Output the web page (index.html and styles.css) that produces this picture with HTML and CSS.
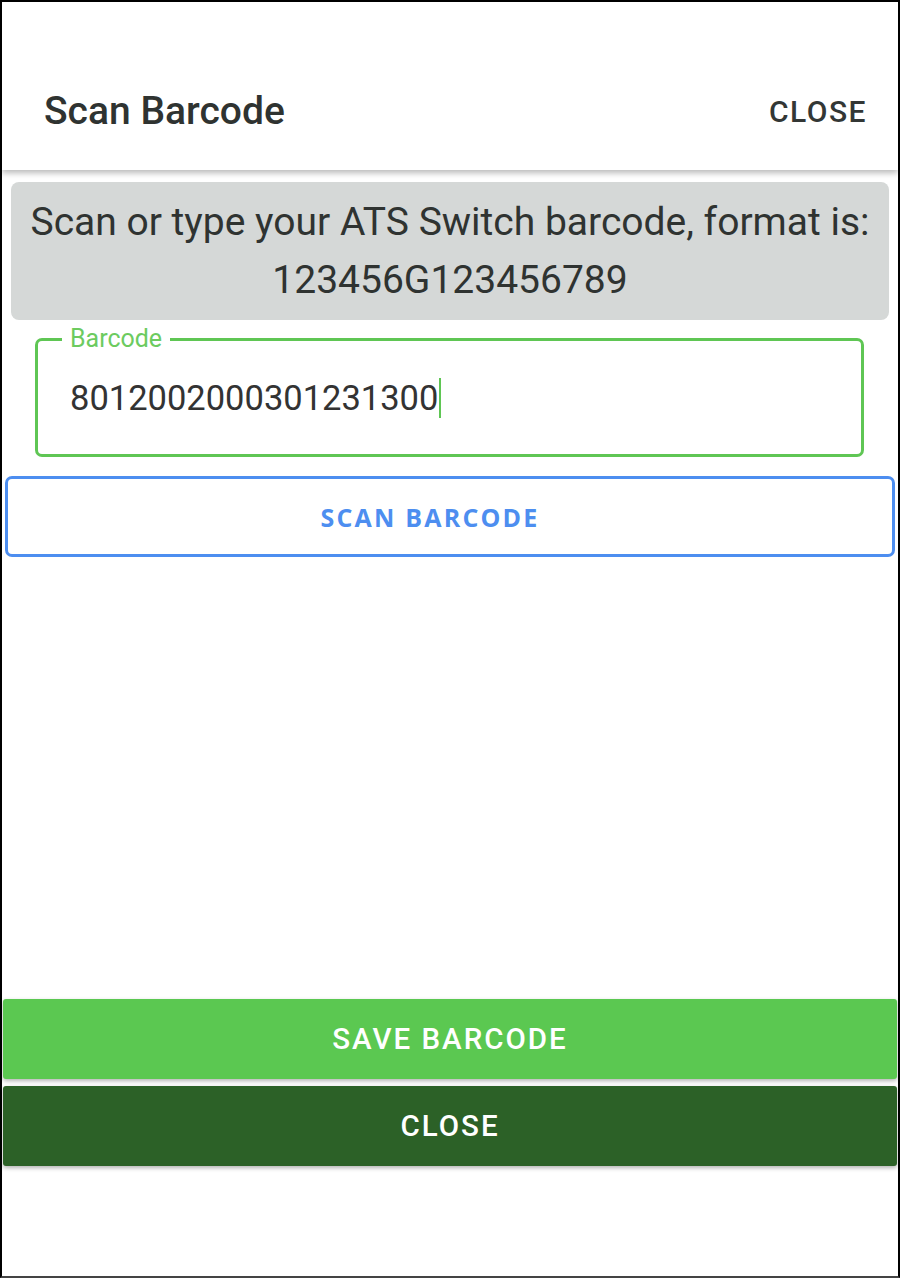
FILE: index.html
```html
<!DOCTYPE html>
<html>
<head>
<meta charset="utf-8">
<link rel="stylesheet" href="styles.css">
</head>
<body>
<div class="frame">
  <header class="topbar">
    <h1 class="title">Scan Barcode</h1>
    <span class="top-close">CLOSE</span>
  </header>
  <main class="content">
    <div class="notice">
      <p>Scan or type your ATS Switch barcode, format is:</p>
      <p>123456G123456789</p>
    </div>
    <fieldset class="field">
      <legend class="field-label">Barcode</legend>
      <div class="field-value"><span>8012002000301231300</span><span class="caret"></span></div>
    </fieldset>
    <button class="scan-btn">SCAN BARCODE</button>
  </main>
  <footer class="actions">
    <button class="save-btn">SAVE BARCODE</button>
    <button class="close-btn">CLOSE</button>
  </footer>
</div>
</body>
</html>
```

FILE: styles.css
```css
* { box-sizing: border-box; }
html, body { margin: 0; padding: 0; }
body {
  width: 900px;
  height: 1278px;
  font-family: Roboto, "Liberation Sans", sans-serif;
  color: #333;
  background: #fff;
}
.frame {
  width: 900px;
  height: 1278px;
  border: 2px solid #000;
  border-bottom-color: #444;
  display: flex;
  flex-direction: column;
  background: #fff;
}
.topbar {
  height: 168px;
  flex: 0 0 168px;
  display: flex;
  align-items: center;
  justify-content: space-between;
  padding: 50px 31px 0 42px;
  box-shadow: 0 3px 6px rgba(0,0,0,0.28);
  position: relative;
  z-index: 1;
}
.title {
  margin: 0;
  font-size: 39px;
  font-weight: 500;
  color: #2f3331;
}
.top-close {
  font-size: 30px;
  font-weight: 500;
  letter-spacing: 1.5px;
  color: #333735;
}
.content {
  display: flex;
  flex-direction: column;
  padding: 12px 3px 0 3px;
}
.notice {
  margin: 0 6px;
  background: #d5d8d7;
  border-radius: 8px;
  height: 138px;
  display: flex;
  flex-direction: column;
  justify-content: center;
  text-align: center;
  font-size: 39px;
  line-height: 58px;
  color: #2f3331;
  padding-bottom: 0;
}
.notice p { margin: 0; }
.field {
  margin: 8px 31px 0 30px;
  border: 3px solid #5fc654;
  border-radius: 7px;
  height: 129px;
  padding: 0 0 0 24px;
  min-width: 0;
}
.field-label {
  margin-left: 0;
  padding: 0 8px;
  font-size: 25px;
  color: #6ccb5f;
  line-height: 22px;
}
.field-value {
  display: flex;
  align-items: center;
  height: 90px;
  padding: 6px 0 0 8px;
  font-size: 34.5px;
  color: #333;
}
.caret {
  display: inline-block;
  width: 2px;
  height: 40px;
  background: #5fc654;
  margin-left: 1px;
}
.scan-btn {
  margin: 19px 0 0 0;
  height: 81px;
  border: 3px solid #4d8ef0;
  border-radius: 7px;
  background: #fff;
  color: #4d8ef0;
  font-family: "Open Sans", "Noto Sans", sans-serif;
  font-weight: 700;
  font-size: 25px;
  letter-spacing: 2.2px;
  padding: 0 40px 0 0;
}
.actions {
  margin-top: auto;
  margin-bottom: 110px;
  display: flex;
  flex-direction: column;
  gap: 7px;
  padding: 0 1px;
}
.actions button {
  border: none;
  height: 80px;
  font-family: Roboto, "Liberation Sans", sans-serif;
  font-weight: 500;
  font-size: 29.5px;
  letter-spacing: 2px;
  color: #fff;
  box-shadow: 0 2px 4px rgba(0,0,0,0.3);
  border-radius: 3px;
}
.save-btn { background: #5bc851; }
.close-btn { background: #2c6127; height: 78px; }
```
